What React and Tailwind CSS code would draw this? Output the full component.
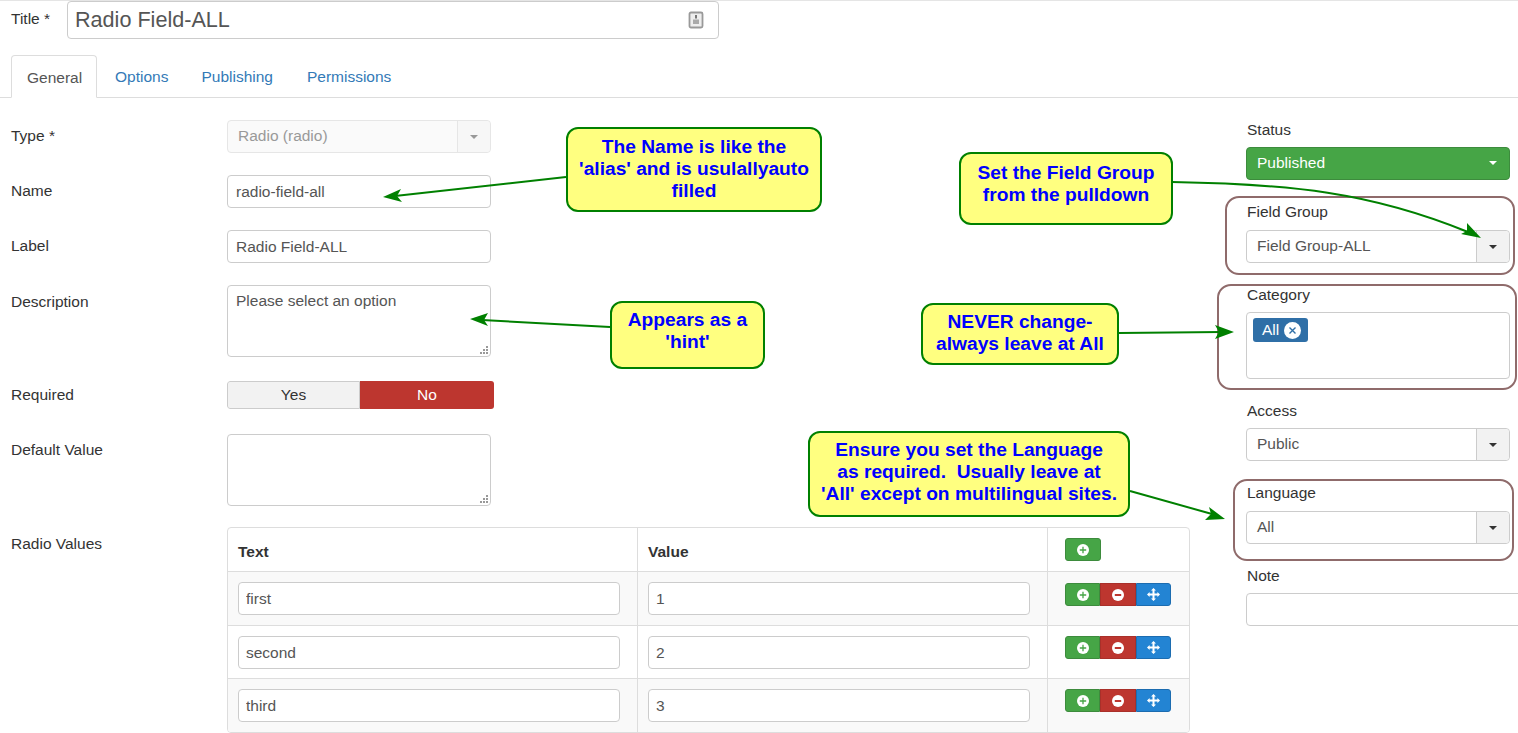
import React from 'react';

const Caret = ({ className = 'border-t-[#333]' }) => (
  <span className={`block h-0 w-0 border-x-[4.5px] border-t-[4.5px] border-x-transparent ${className}`} />
);

const Select = ({ value, disabled }) => (
  <div className={`flex h-[33px] w-[264px] rounded-[4px] border ${disabled ? 'border-[#e6e6e6] bg-[#fafafa] text-[#999]' : 'border-[#ccc] bg-white text-[#555]'}`}>
    <div className="flex-1 pl-[10px] leading-[30px]">{value}</div>
    <div className={`flex w-[33px] items-center justify-center rounded-r-[4px] border-l ${disabled ? 'border-[#e6e6e6] bg-[#f7f7f7]' : 'border-[#ccc] bg-[#f2f2f2]'}`}>
      <Caret className={disabled ? 'border-t-[#999]' : 'border-t-[#333]'} />
    </div>
  </div>
);

const TextField = ({ value, className = 'w-[264px] px-[8px]' }) => (
  <input
    readOnly
    value={value}
    className={`block h-[33px] rounded-[4px] border border-[#ccc] bg-white text-[#555] outline-none ${className}`}
  />
);

const TextArea = ({ value }) => (
  <div className="relative h-[72px] w-[264px]">
    <textarea
      readOnly
      defaultValue={value}
      className="block h-full w-full resize-none rounded-[4px] border border-[#ccc] bg-white px-[8px] py-[5px] leading-[20px] text-[#555] outline-none"
    />
    <svg className="absolute bottom-[3px] right-[3px]" width="8" height="8" viewBox="0 0 8 8" fill="#999">
      <rect x="6" y="0" width="2" height="2" />
      <rect x="3" y="3" width="2" height="2" />
      <rect x="6" y="3" width="2" height="2" />
      <rect x="0" y="6" width="2" height="2" />
      <rect x="3" y="6" width="2" height="2" />
      <rect x="6" y="6" width="2" height="2" />
    </svg>
  </div>
);

const Row = ({ label, className, labelClass = 'pt-[6px]', children }) => (
  <div className={`flex items-start ${className}`}>
    <div className={`w-[216px] leading-[20px] text-[#333] ${labelClass}`}>{label}</div>
    {children}
  </div>
);

const PlusIcon = ({ color }) => (
  <svg width="12" height="12" viewBox="0 0 12 12">
    <circle cx="6" cy="6" r="6" fill="#fff" />
    <path d="M6 2.8v6.4M2.8 6h6.4" stroke={color} strokeWidth="1.3" />
  </svg>
);

const MinusIcon = ({ color }) => (
  <svg width="12" height="12" viewBox="0 0 12 12">
    <circle cx="6" cy="6" r="6" fill="#fff" />
    <path d="M2.8 6h6.4" stroke={color} strokeWidth="1.8" />
  </svg>
);

const MoveIcon = () => (
  <svg width="13" height="13" viewBox="0 0 13 13" fill="#fff">
    <path d="M6.5 0 9 2.6H7.5V5.5H10.4V4L13 6.5 10.4 9V7.5H7.5V10.4H9L6.5 13 4 10.4H5.5V7.5H2.6V9L0 6.5 2.6 4V5.5H5.5V2.6H4Z" />
  </svg>
);

const Actions = () => (
  <div className="flex h-[23px] w-[106px]">
    <div className="flex flex-1 items-center justify-center rounded-l-[3px] border border-[#3d8b3d] bg-[#46a546]"><PlusIcon color="#46a546" /></div>
    <div className="flex flex-1 items-center justify-center border border-[#a9302a] bg-[#bd362f]"><MinusIcon color="#bd362f" /></div>
    <div className="flex flex-1 items-center justify-center rounded-r-[3px] border border-[#1c6cb0] bg-[#2384d3]"><MoveIcon /></div>
  </div>
);

const rows = [
  { text: 'first', value: '1', row: 'h-[54px] bg-[#f9f9f9]', action: 'pt-[11px]' },
  { text: 'second', value: '2', row: 'h-[53px] bg-white', action: 'pt-[10px]' },
  { text: 'third', value: '3', row: 'h-[53px] bg-[#f9f9f9]', action: 'pt-[10px]' },
];

const ValuesTable = () => (
  <div className="w-[963px] overflow-hidden rounded-[4px] border border-[#ddd]">
    <div className="flex h-[44px] border-b border-[#ddd] font-bold text-[#333]">
      <div className="w-[409px] pl-[10px] pt-[12px]">Text</div>
      <div className="w-[410px] border-l border-[#ddd] pl-[10px] pt-[12px]">Value</div>
      <div className="flex-1 border-l border-[#ddd] pl-[17px] pt-[10px]">
        <div className="flex h-[23px] w-[36px] items-center justify-center rounded-[3px] border border-[#3d8b3d] bg-[#46a546]"><PlusIcon color="#46a546" /></div>
      </div>
    </div>
    {rows.map((r) => (
      <div key={r.text} className={`flex border-b border-[#ddd] last:border-b-0 ${r.row}`}>
        <div className="w-[409px] pl-[10px] pt-[10px]"><TextField value={r.text} className="w-[382px] px-[7px]" /></div>
        <div className="w-[410px] border-l border-[#ddd] pl-[10px] pt-[10px]"><TextField value={r.value} className="w-[382px] px-[7px]" /></div>
        <div className={`flex-1 border-l border-[#ddd] pl-[17px] ${r.action}`}><Actions /></div>
      </div>
    ))}
  </div>
);

const SideLabel = ({ children, className = '' }) => (
  <div className={`pl-[1px] leading-[20px] text-[#333] ${className}`}>{children}</div>
);

const Callout = ({ className, children }) => (
  <div className={`absolute flex flex-col items-center justify-center whitespace-pre rounded-[12px] border-2 border-[#008000] bg-[#ffff80] text-center text-[19.2px] font-bold leading-[22px] text-[#0000ff] ${className}`}>
    {children}
  </div>
);

const Marks = ({ className }) => <div className={`absolute rounded-[14px] border-2 border-[#8f6b6b] ${className}`} />;

// arrows drawn over the form, shaft plus notched head
const Arrows = () => (
  <svg className="absolute left-0 top-0" width="1518" height="733" fill="none">
    <g stroke="#008000" strokeWidth="2">
      <path d="M566 177 395 196" />
      <path d="M1172 182C1290 184 1370 192 1468 232" />
      <path d="M610 327 482 320" />
      <path d="M1119 333 1222 332" />
      <path d="M1130 491 1212 514" />
    </g>
    <g fill="#008000">
      <path d="M383 197 401 189 397 196 402 202Z" />
      <path d="M1481 238 1461 234 1467 231 1467 223Z" />
      <path d="M470 319 488 313 484 320 488 326Z" />
      <path d="M1234 332 1215 325 1219 332 1215 339Z" />
      <path d="M1225 519 1205 520 1211 514 1209 507Z" />
    </g>
  </svg>
);

const App = () => {
  return (
    <div className="relative h-[733px] w-[1518px] overflow-hidden bg-white text-[15.5px] [font-family:'Liberation_Sans',Arial,sans-serif]">
      <div className="flex h-[39px] items-start border-t border-[#e5e5e5]">
        <div className="w-[67px] pl-[11px] pt-[8px] leading-[20px] text-[#333]">Title *</div>
        <div className="flex h-[38px] w-[652px] items-center justify-between rounded-[4px] border border-[#ccc] pl-[7px] pr-[14px] text-[21.6px] text-[#555]">
          <span>Radio Field-ALL</span>
          <svg width="16" height="18" viewBox="0 0 16 18">
            <rect x="1.5" y="1.5" width="13" height="15" rx="1.5" fill="#eee" stroke="#999" strokeWidth="1.8" />
            <path d="M7 4h2v3.5H7Z" fill="#777" />
            <path d="M5 8.5h6V13H5Z" fill="#aaa" />
          </svg>
        </div>
      </div>

      <div className="mt-[16px] flex h-[43px] border-b border-[#ddd] pl-[11px]">
        <div className="h-[43px] w-[86px] rounded-t-[4px] border border-[#ddd] border-b-white bg-white pl-[15px] pt-[10px] text-[#555]">General</div>
        <div className="pl-[18px] pr-[16px] pt-[10px] text-[#337ab7]">Options</div>
        <div className="px-[17px] pt-[10px] text-[#337ab7]">Publishing</div>
        <div className="px-[17px] pt-[10px] text-[#337ab7]">Permissions</div>
      </div>

      <div className="flex pl-[11px] pt-[22px]">
        <div className="w-[1179px] shrink-0">
          <Row label="Type *" className="mb-[22px]"><Select value="Radio (radio)" disabled /></Row>
          <Row label="Name" className="mb-[22px]"><TextField value="radio-field-all" /></Row>
          <Row label="Label" className="mb-[22px]"><TextField value="Radio Field-ALL" /></Row>
          <Row label="Description" labelClass="pt-[7px]" className="mb-[24px]"><TextArea value="Please select an option" /></Row>
          <Row label="Required" labelClass="pt-[4px]" className="mb-[25px]">
            <div className="flex h-[28px] w-[267px] overflow-hidden rounded-[3px]">
              <div className="w-[133px] rounded-l-[3px] border border-[#ccc] bg-[#f2f2f2] text-center leading-[26px] text-[#333]">Yes</div>
              <div className="flex-1 bg-[#bd362f] text-center leading-[28px] text-white">No</div>
            </div>
          </Row>
          <Row label="Default Value" className="mb-[21px]"><TextArea value="" /></Row>
          <Row label="Radio Values" labelClass="pt-[7px]"><ValuesTable /></Row>
        </div>

        <div className="ml-[56px] w-[264px] shrink-0">
          <SideLabel className="mb-[7px]">Status</SideLabel>
          <div className="mb-[22px] flex h-[33px] items-center justify-between rounded-[4px] border border-[#3d8b3d] bg-[#46a546] pb-[1px] pl-[10px] pr-[12px] text-white">
            <span>Published</span>
            <Caret className="border-t-white" />
          </div>
          <SideLabel className="mb-[8px]">Field Group</SideLabel>
          <div className="mb-[22px]"><Select value="Field Group-ALL" /></div>
          <SideLabel className="mb-[7px]">Category</SideLabel>
          <div className="mb-[22px] h-[67px] rounded-[4px] border border-[#ccc] bg-white pl-[6px] pt-[5px]">
            <div className="flex h-[24px] w-[55px] items-center gap-[5px] rounded-[3px] bg-[#2f6fa7] pl-[9px] text-white">
              <span>All</span>
              <svg width="17" height="17" viewBox="0 0 17 17">
                <circle cx="8.5" cy="8.5" r="8.5" fill="#fff" />
                <path d="M5.5 5.5l6 6M11.5 5.5l-6 6" stroke="#2f6fa7" strokeWidth="1.4" />
              </svg>
            </div>
          </div>
          <SideLabel className="mb-[7px]">Access</SideLabel>
          <div className="mb-[22px]"><Select value="Public" /></div>
          <SideLabel className="mb-[8px]">Language</SideLabel>
          <div className="mb-[22px]"><Select value="All" /></div>
          <SideLabel className="mb-[7px]">Note</SideLabel>
          <TextField value="" className="w-[300px] px-[8px]" />
        </div>
      </div>

      <Marks className="left-[1225px] top-[196px] h-[79px] w-[290px]" />
      <Marks className="left-[1217px] top-[284px] h-[106px] w-[300px]" />
      <Marks className="left-[1233px] top-[479px] h-[82px] w-[281px]" />

      <Arrows />

      <Callout className="left-[566px] top-[127px] h-[85px] w-[256px] pb-[2px]">
        <span>The Name is like the</span>
        <span>'alias' and is usulallyauto</span>
        <span>filled</span>
      </Callout>
      <Callout className="left-[959px] top-[152px] h-[73px] w-[214px] pb-[10px]">
        <span>Set the Field Group</span>
        <span>from the pulldown</span>
      </Callout>
      <Callout className="left-[610px] top-[301px] h-[68px] w-[155px] pb-[8px]">
        <span>Appears as a</span>
        <span>'hint'</span>
      </Callout>
      <Callout className="left-[921px] top-[303px] h-[62px] w-[198px] pb-[2px]">
        <span>NEVER change-</span>
        <span>always leave at All</span>
      </Callout>
      <Callout className="left-[808px] top-[431px] h-[86px] w-[322px] pb-[4px]">
        <span>Ensure you set the Language</span>
        <span>as required.  Usually leave at</span>
        <span>'All' except on multilingual sites.</span>
      </Callout>
    </div>
  );
};

export default App;
